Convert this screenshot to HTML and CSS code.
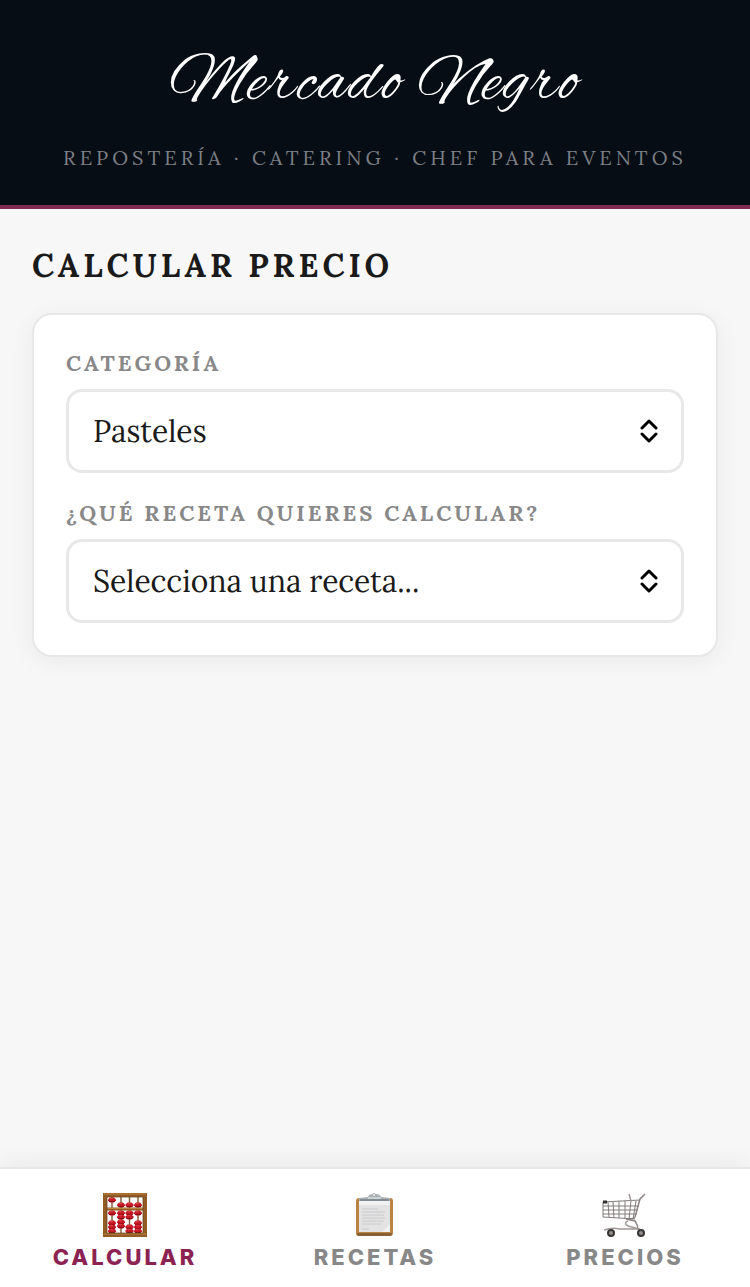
FILE: index.html
```html
<!DOCTYPE html>
<html lang="es">
<head>
    <meta charset="UTF-8">
    <meta name="viewport" content="width=device-width, initial-scale=1.0">
    <title>Mercado Negro</title>
    <link rel="stylesheet" href="styles.css">
</head>
<body>
    <header class="header">
        <div class="logo">Mercado Negro</div>
        <div class="tagline">Repostería · Catering · Chef para eventos</div>
    </header>

    <main class="content">
        <h1 class="title">Calcular precio</h1>
        <div class="card">
            <div class="field">
                <label for="categoria">Categoría</label>
                <select id="categoria">
                    <option>Pasteles</option>
                </select>
            </div>
            <div class="field">
                <label for="receta">¿Qué receta quieres calcular?</label>
                <select id="receta">
                    <option>Selecciona una receta...</option>
                </select>
            </div>
        </div>
    </main>

    <nav class="tabs">
        <button class="tab active" type="button">
            <svg class="icon" viewBox="0 0 46 46" aria-hidden="true">
                <defs>
                    <g id="bead">
                        <path d="M-4-.5L-2-2.500H2L4-.5V.5L2 2.500H-2L-4 .5Z" fill="#c41824"/>
                        <path d="M-2-1.300H1" stroke="#e2454d" stroke-width="1"/>
                        <path d="M-3 1.500H3" stroke="#860b16" stroke-width="1"/>
                    </g>
                </defs>
                <path d="M10 5V41M19 5V41M27.500 5V41M36 5V41" stroke="#826741" stroke-width="1.500"/>
                <use href="#bead" x="10" y="8"/><use href="#bead" x="19" y="13"/><use href="#bead" x="27.500" y="13"/><use href="#bead" x="36" y="13"/>
                <use href="#bead" x="10" y="21"/><use href="#bead" x="10" y="31"/><use href="#bead" x="10" y="35"/><use href="#bead" x="10" y="39"/>
                <use href="#bead" x="19" y="21"/><use href="#bead" x="19" y="25"/><use href="#bead" x="19" y="30"/><use href="#bead" x="19" y="34"/>
                <use href="#bead" x="27.500" y="21"/><use href="#bead" x="27.500" y="25"/><use href="#bead" x="27.500" y="35"/><use href="#bead" x="27.500" y="39"/>
                <use href="#bead" x="36" y="21"/><use href="#bead" x="36" y="31"/><use href="#bead" x="36" y="35"/><use href="#bead" x="36" y="39"/>
                <path d="M3 3H43V43H3Z" fill="none" stroke="#925d25" stroke-width="4"/>
                <path d="M5 17H41" stroke="#925d25" stroke-width="3"/>
                <path d="M2 2H44M2 42H44M5 16.500H41" stroke="#bd8440" stroke-width="1"/>
                <path d="M5 5H41V41H5Z" fill="none" stroke="#5e3914" stroke-width=".7"/>
            </svg>
            <span>Calcular</span>
        </button>
        <button class="tab" type="button">
            <svg class="icon" viewBox="0 0 46 46" aria-hidden="true">
                <rect x="4" y="6" width="37" height="38" rx="3" fill="#b88343"/>
                <path d="M5 41H40V42Q40 44 38 44H7Q5 44 5 42Z" fill="#896032"/>
                <path d="M7 8H38V40H7Z" fill="#e3e3e4"/>
                <path d="M7 8H38V13H7Z" fill="#f1f1f1"/>
                <path d="M7 40L30 40L38 32V40Z" fill="#f1f1f1"/>
                <path d="M10 17H26M10 20H33M10 23H32M10 26H33M10 29H32M10 32H29M10 37H17" stroke="#cacacc" stroke-width="1"/>
                <path d="M7 6L16 5Q17 2 21 2H24Q28 2 29 5L38 6V9H7Z" fill="#a9afb3"/>
                <path d="M8 8H37" stroke="#788086" stroke-width="1.500"/>
                <path d="M16 6H29" stroke="#d6dcdf" stroke-width="1.500"/>
                <circle cx="22" cy="3" r="1.500" fill="#fff" stroke="#a4abaf"/>
            </svg>
            <span>Recetas</span>
        </button>
        <button class="tab" type="button">
            <svg class="icon" viewBox="0 0 46 46" fill="none" aria-hidden="true">
                <path d="M43 2L38 7L33 25Q32 27 26 27L24 27L33 29Q36 33 36 38" stroke="#8c8583" stroke-width="1.500"/>
                <path d="M1 10L38 8M1 10V25L33 27M1 14H37M1 18H36M1 22H35M6 10L7 25M11 10L12 26M17 9V26M23 9V27M29 9L27 27M34 9L31 27" stroke="#817c7b" stroke-width="1"/>
                <path d="M27 2L29 9M26 29Q21 31 26 34L37 37M2 38Q11 35 17 37H38" stroke="#a09997" stroke-width="1.500"/>
                <path d="M1 10H5" stroke="#302d2c" stroke-width="3"/>
                <circle cx="9" cy="41" r="3" fill="#918d8b" stroke="#383535" stroke-width="2"/>
                <circle cx="39" cy="41" r="3" fill="#918d8b" stroke="#383535" stroke-width="2"/>
            </svg>
            <span>Precios</span>
        </button>
    </nav>
</body>
</html>
```

FILE: styles.css
```css
* {
    box-sizing: border-box;
}
body {
    margin: 0;
    min-height: 100vh;
    display: flex;
    flex-direction: column;
    background: #f7f7f7;
    color: #1a1a1a;
    font-family: Lora, 'Liberation Serif', serif;
}
.header {
    padding: 40px 32px 31px;
    background: #060d14;
    border-bottom: 4px solid #7e2b54;
    text-align: center;
}
.logo {
    color: #fff;
    font-family: 'Alex Brush', 'Liberation Serif', serif;
    font-size: 68px;
    line-height: 90px;
    letter-spacing: 2px;
}
.tagline {
    margin-top: 12px;
    color: #7c7f85;
    font-size: 20px;
    line-height: 32px;
    letter-spacing: 4px;
    text-transform: uppercase;
}
.content {
    flex: 1;
    padding: 32px;
}
.title {
    margin: 0 0 22px;
    font-size: 32px;
    font-weight: 700;
    line-height: 50px;
    letter-spacing: 4px;
    text-transform: uppercase;
}
.card {
    display: flex;
    flex-direction: column;
    gap: 24px;
    padding: 32px;
    background: #fff;
    border: 2px solid #e8e8e8;
    border-radius: 20px;
    box-shadow: 0 4px 24px rgba(0, 0, 0, 0.06);
}
.field label {
    display: block;
    margin-bottom: 10px;
    color: #888;
    font-size: 22px;
    font-weight: 700;
    line-height: 32px;
    letter-spacing: 3px;
    text-transform: uppercase;
}
.field select {
    display: block;
    width: 100%;
    height: 84px;
    padding: 0 64px 0 24px;
    appearance: none;
    border: 3px solid #e8e8e8;
    border-radius: 16px;
    background: #fff url("data:image/svg+xml,%3Csvg xmlns='http://www.w3.org/2000/svg' viewBox='0 0 18 24' fill='none' stroke='black' stroke-width='3' stroke-linecap='round' stroke-linejoin='round'%3E%3Cpath d='M2 9L9 2L16 9M2 15L9 22L16 15'/%3E%3C/svg%3E") no-repeat right 23px center / 18px 24px;
    color: #1a1a1a;
    font-family: inherit;
    font-size: 30px;
}
.tabs {
    position: sticky;
    bottom: 0;
    display: flex;
    background: #fff;
    border-top: 2px solid #e8e8e8;
    box-shadow: 0 -4px 24px rgba(0, 0, 0, 0.06);
}
.tab {
    flex: 1;
    display: flex;
    flex-direction: column;
    align-items: center;
    gap: 4px;
    padding: 23px 0 15px;
    border: none;
    background: none;
    color: #888;
    font-family: Inter, sans-serif;
    font-size: 22px;
    font-weight: 800;
    line-height: 30px;
    letter-spacing: 3px;
    text-transform: uppercase;
    cursor: pointer;
}
.tab.active {
    color: #8b2252;
}
.icon {
    width: 46px;
    height: 46px;
}
```
